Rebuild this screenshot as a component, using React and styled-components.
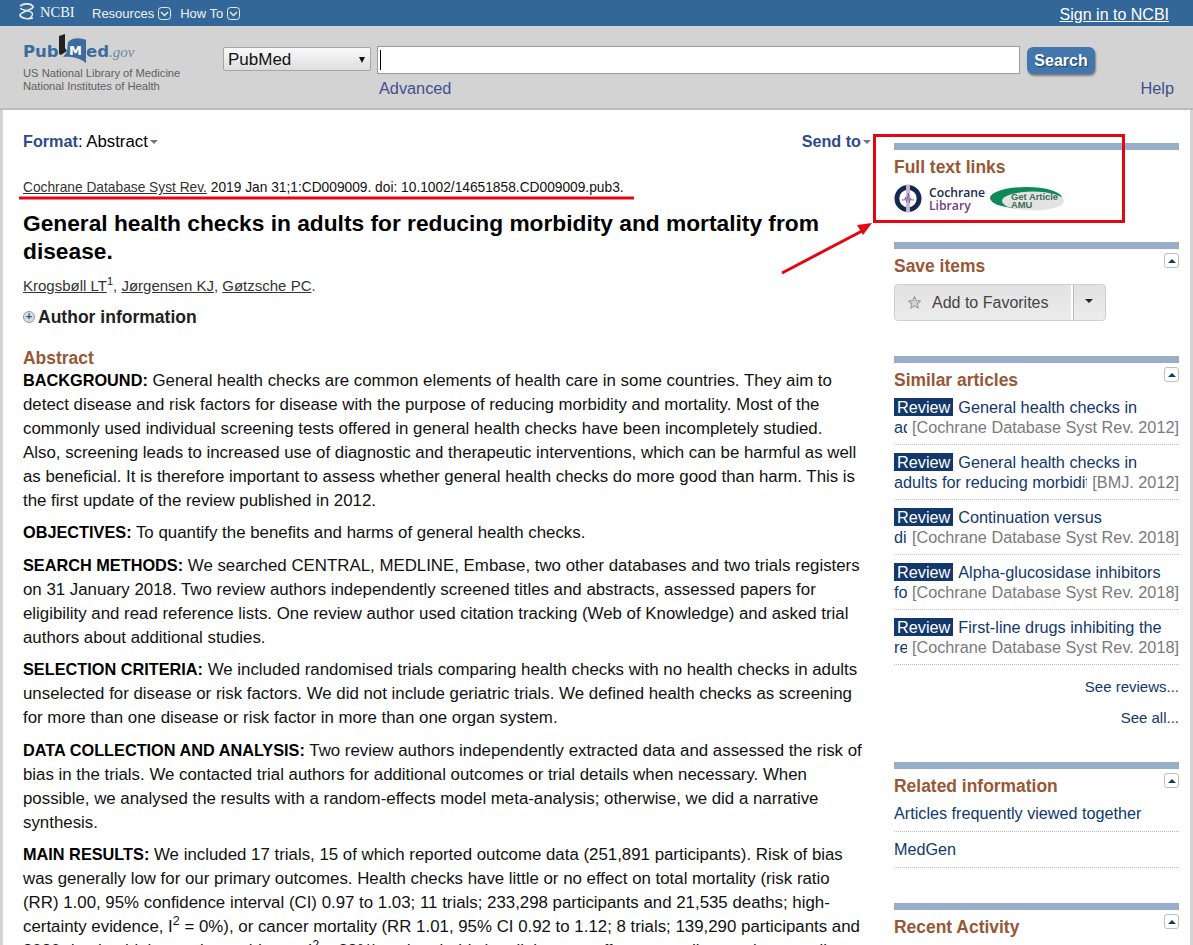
import React from "react";
import styled, { createGlobalStyle } from "styled-components";

const Global = createGlobalStyle`
  html, body { margin: 0; padding: 0; height: 945px; overflow: hidden; background: #fff; }
  body { font-family: "Liberation Sans", Arial, sans-serif; color: #000; }
  #root { height: 945px; overflow: hidden; }
  * { box-sizing: border-box; }
`;

const Page = styled.div`position: relative; width: 1193px; height: 945px; overflow: hidden;`;

const TopBar = styled.div`
  height: 26px; background: #336699; display: flex; align-items: center;
  padding: 0 24px 0 18px; color: #fff;
`;
const NcbiMark = styled.div`
  display: flex; align-items: center; gap: 5px; width: 74px; margin-top: -2px;
  font-family: "Liberation Serif", serif; font-size: 14.5px; color: #f2f5f9;
`;
const NavItem = styled.span`
  display: flex; align-items: center; gap: 4px; font-size: 13px; color: #eef2f7; margin-right: 9px;
`;
const SignIn = styled.a`
  margin-left: auto; font-size: 16px; color: #fff; text-decoration: underline; margin-top: 3px;
`;

const Header = styled.div`
  height: 84px; background: #d3d3d3; border-bottom: 2px solid #bcbcbc;
  display: flex; padding: 0 19px 0 23px;
`;
const Brand = styled.div`
  width: 200px; padding-top: 8px; font-size: 11.2px; line-height: 13px; color: #606060;
`;
const LogoBox = styled.div`height: 33px;`;
const SearchArea = styled.div`flex: 1; padding-top: 20px;`;
const SearchRow = styled.div`display: flex; align-items: flex-start; height: 28px;`;
const SelectBox = styled.div`
  width: 148px; height: 24px; margin-top: 1px; border: 1px solid #a6a6a6; border-radius: 2px;
  background: linear-gradient(#fbfbfb, #dddddd); display: flex; align-items: center;
  justify-content: space-between; padding: 1px 4px 0; font-size: 17px; color: #111;
`;
const SelectArrow = styled.span`
  width: 0; height: 0; border-left: 3px solid transparent; border-right: 3px solid transparent;
  border-top: 6px solid #111; margin-right: 1px;
`;
const SearchInput = styled.div`
  width: 643px; height: 28px; margin-left: 6px; background: #fff; border: 1px solid #9a9a9a;
  padding: 3px 2px;
`;
const Caret = styled.div`width: 1px; height: 20px; background: #000;`;
const SearchButton = styled.div`
  width: 68px; height: 27px; margin: 1px 0 0 7px; border-radius: 6px; background: #4276ad;
  box-shadow: 1px 2px 2px #7d7d7d; color: #fff; font-weight: 700; font-size: 16px;
  text-shadow: 1px 1px 1px #1d3d5f; display: flex; align-items: center; justify-content: center;
`;
const SearchLinks = styled.div`
  display: flex; justify-content: space-between; padding: 4px 0 0 156px; font-size: 16.3px;
  color: #3f5190; line-height: 20px;
`;

const Body = styled.div`
  height: 835px; border-left: 3px solid #d3d3d3; border-right: 3px solid #d3d3d3;
  display: flex; padding-left: 20px; overflow: hidden;
`;
const Main = styled.div`width: 845px; flex: none; padding-top: 21px;`;
const FormatRow = styled.div`
  display: flex; justify-content: space-between; font-size: 16.8px; line-height: 20px; height: 20px;
`;
const FormatLabel = styled.b`color: #2f4a8b; font-size: 16.2px;`;
const Caretdown = styled.span`
  display: inline-block; width: 0; height: 0; margin-left: 2px; vertical-align: 3px;
  border-left: 4px solid transparent; border-right: 4px solid transparent; border-top: 4px solid #777;
`;
const SendTo = styled.span`font-weight: 700; font-size: 16.2px; color: #2f4a8b; margin-right: -3px;`;
const Citation = styled.div`
  margin-top: 28px; font-size: 13.75px; line-height: 18px; color: #111; white-space: nowrap;
`;
const U = styled.span`text-decoration: underline; color: #333;`;
const Title = styled.h1`
  margin: 12px 0 0; font-size: 22.74px; line-height: 28px; font-weight: 700; color: #000; width: 830px;
`;
const Authors = styled.div`
  margin-top: 11px; font-size: 15px; line-height: 20px; color: #333;
  sup { font-size: 11px; line-height: 0; color: #222; }
`;
const AuthorInfo = styled.div`
  display: flex; align-items: center; gap: 3px; margin-top: 11px; font-size: 17.55px; font-weight: 700;
  line-height: 20px; color: #222;
`;
const Plus = styled.span`
  width: 12px; height: 12px; border-radius: 50%; background: #d8dde2; border: 1px solid #8f979f;
  color: #36557a; font-size: 11px; line-height: 9px; text-align: center; font-weight: 700;
`;
const SectionTitle = styled.div`
  font-size: 17.45px; font-weight: 700; color: #985735; line-height: 20px;
`;
const AbstractHead = styled(SectionTitle)`margin: 21px 0 1px;`;
const Para = styled.p`
  margin: 0 0 8.4px; font-size: 16.85px; line-height: 24px; color: #111;
  b { color: #000; font-size: 16.3px; line-height: 0; }
  sup { font-size: 12.5px; line-height: 0; }
`;

const Side = styled.div`width: 285px; flex: none; margin-left: 26px; padding-top: 33px;`;
const Box = styled.section`
  position: relative; border-top: 7px solid #97aec8; padding-top: 7px; height: ${(p) => p.$h}px;
`;
const Toggle = styled.div`
  position: absolute; right: 0; top: 4px; width: 15px; height: 15px;
  border: 1px solid #bdbdbd; border-radius: 3px; background: #fff; display: flex; align-items: center;
  justify-content: center;
  &::after {
    content: ""; width: 0; height: 0; border-left: 4px solid transparent; border-right: 4px solid transparent;
    border-bottom: 4px solid #12386c;
  }
`;
const Logos = styled.div`display: flex; align-items: center; margin-top: 7px;`;
const CochraneText = styled.div`
  font-family: "Open Sans", sans-serif; font-size: 12.2px; line-height: 13px; font-weight: 600; color: #16294f;
  margin: 0 5px 0 7px; width: 56px;
  span { display: block; color: #6b3f83; }
`;
const FavButton = styled.div`
  margin-top: 8px; width: 212px; height: 37px; border: 1px solid #cfcfcf; border-radius: 4px;
  background: linear-gradient(#e2e2e2, #ececec); display: flex; align-items: center;
  font-size: 16px; color: #444;
`;
const FavMain = styled.div`
  width: 178px; height: 100%; display: flex; align-items: center; gap: 11px; padding-left: 13px;
  border-right: 2px solid #fff; box-shadow: 1px 0 0 #bcbcbc;
`;
const FavArrow = styled.div`
  margin-left: 12px; width: 0; height: 0; border-left: 4px solid transparent; border-right: 4px solid transparent;
  border-top: 4px solid #222; margin-top: -3px;
`;
const Article = styled.div`
  height: 55px; border-bottom: 1px dotted #bdbdbd; padding-top: 7px; font-size: 16.25px; line-height: 20px;
  color: #12386c;
`;
const FirstLine = styled.div`white-space: nowrap; height: 20px;`;
const Badge = styled.span`
  display: inline-block; background: #12386c; color: #fff; padding: 0 3px; line-height: 18px; margin-right: 5px;
`;
const SecondLine = styled.div`display: flex; justify-content: space-between; gap: 5px; white-space: nowrap;`;
const Clip = styled.span`flex: 1; overflow: hidden; min-width: 0;`;
const Journal = styled.span`color: #7a7a7a; flex: none;`;
const More = styled.div`
  text-align: right; font-size: 15px; color: #12386c; line-height: 20px; margin-top: ${(p) => p.$mt}px;
`;
const InfoLink = styled.div`
  height: 36px; border-bottom: 1px dotted #bdbdbd; font-size: 16.2px; line-height: 20px; color: #12386c; padding-top: 7px;
`;

const Overlay = styled.svg`position: absolute; left: 0; top: 0; pointer-events: none;`;

const Chevron = () => (
  <svg width="13" height="13" viewBox="0 0 13 13">
    <rect x="0.5" y="0.5" width="12" height="12" rx="3" fill="none" stroke="#e8eef5" />
    <path d="M3 5l3.5 3.5L10 5" fill="none" stroke="#e8eef5" strokeWidth="1.4" />
  </svg>
);

const articles = [
  ["General health checks in", "adults for reducing morbidity", "[Cochrane Database Syst Rev. 2012]"],
  ["General health checks in", "adults for reducing morbidity", "[BMJ. 2012]"],
  ["Continuation versus", "discontinuation", "[Cochrane Database Syst Rev. 2018]"],
  ["Alpha-glucosidase inhibitors", "for patients", "[Cochrane Database Syst Rev. 2018]"],
  ["First-line drugs inhibiting the", "renin angiotensin", "[Cochrane Database Syst Rev. 2018]"],
];

export default function App() {
  return (
    <Page>
      <Global />
      <TopBar>
        <NcbiMark>
          <svg width="17" height="18" viewBox="0 0 16 17">
            <path d="M2 3C5 0 12 0 14 3S3 8 2 11s8 5 12 3" fill="none" stroke="#e6ecf3" strokeWidth="1.6" />
            <path d="M2 5c2 2 9 2 11 4s-1 5-3 6" fill="none" stroke="#e6ecf3" strokeWidth="1.3" />
          </svg>
          NCBI
        </NcbiMark>
        <NavItem>Resources <Chevron /></NavItem>
        <NavItem>How To <Chevron /></NavItem>
        <SignIn>Sign in to NCBI</SignIn>
      </TopBar>
      <Header>
        <Brand>
          <LogoBox>
            <svg width="112" height="33" viewBox="0 0 112 33">
              <text x="0" y="23" fontFamily="'DejaVu Sans', sans-serif" fontWeight="700" fontSize="16.5" fill="#3b6c9e">Pub</text>
              <path d="M36 2L42 0V14L44 17L38 21L36 20z" fill="#222" />
              <path d="M45 8C50 3 58 4 63 6V29C58 25 50 22 40 23L44 18z" fill="#3b6c9e" />
              <text x="46" y="21" fontFamily="'DejaVu Sans', sans-serif" fontWeight="700" fontSize="13" fill="#fff">M</text>
              <text x="63" y="23" fontFamily="'DejaVu Sans', sans-serif" fontWeight="700" fontSize="16.5" fill="#3b6c9e">ed</text>
              <text x="86" y="23" fontFamily="'Liberation Serif', serif" fontStyle="italic" fontSize="15" fill="#6d88a6">.gov</text>
            </svg>
          </LogoBox>
          US National Library of Medicine<br />National Institutes of Health
        </Brand>
        <SearchArea>
          <SearchRow>
            <SelectBox>PubMed<SelectArrow /></SelectBox>
            <SearchInput><Caret /></SearchInput>
            <SearchButton>Search</SearchButton>
          </SearchRow>
          <SearchLinks><span>Advanced</span><span>Help</span></SearchLinks>
        </SearchArea>
      </Header>
      <Body>
        <Main>
          <FormatRow>
            <span><FormatLabel>Format</FormatLabel>: Abstract<Caretdown /></span>
            <SendTo>Send to<Caretdown /></SendTo>
          </FormatRow>
          <Citation><U>Cochrane Database Syst Rev.</U> 2019 Jan 31;1:CD009009. doi: 10.1002/14651858.CD009009.pub3.</Citation>
          <Title>General health checks in adults for reducing morbidity and mortality from disease.</Title>
          <Authors><U>Krogsbøll LT</U><sup>1</sup>, <U>Jørgensen KJ</U>, <U>Gøtzsche PC</U>.</Authors>
          <AuthorInfo><Plus>+</Plus>Author information</AuthorInfo>
          <AbstractHead>Abstract</AbstractHead>
          <Para><b>BACKGROUND:</b> General health checks are common elements of health care in some countries. They aim to detect disease and risk factors for disease with the purpose of reducing morbidity and mortality. Most of the commonly used individual screening tests offered in general health checks have been incompletely studied.<br />Also, screening leads to increased use of diagnostic and therapeutic interventions, which can be harmful as well as beneficial. It is therefore important to assess whether general health checks do more good than harm. This is the first update of the review published in 2012.</Para>
          <Para><b>OBJECTIVES:</b> To quantify the benefits and harms of general health checks.</Para>
          <Para><b>SEARCH METHODS:</b> We searched CENTRAL, MEDLINE, Embase, two other databases and two trials registers on 31 January 2018. Two review authors independently screened titles and abstracts, assessed papers for eligibility and read reference lists. One review author used citation tracking (Web of Knowledge) and asked trial authors about additional studies.</Para>
          <Para><b>SELECTION CRITERIA:</b> We included randomised trials comparing health checks with no health checks in adults unselected for disease or risk factors. We did not include geriatric trials. We defined health checks as screening for more than one disease or risk factor in more than one organ system.</Para>
          <Para><b>DATA COLLECTION AND ANALYSIS:</b> Two review authors independently extracted data and assessed the risk of bias in the trials. We contacted trial authors for additional outcomes or trial details when necessary. When possible, we analysed the results with a random-effects model meta-analysis; otherwise, we did a narrative synthesis.</Para>
          <Para><b>MAIN RESULTS:</b> We included 17 trials, 15 of which reported outcome data (251,891 participants). Risk of bias was generally low for our primary outcomes. Health checks have little or no effect on total mortality (risk ratio (RR) 1.00, 95% confidence interval (CI) 0.97 to 1.03; 11 trials; 233,298 participants and 21,535 deaths; high-certainty evidence, I<sup>2</sup> = 0%), or cancer mortality (RR 1.01, 95% CI 0.92 to 1.12; 8 trials; 139,290 participants and 8020 deaths; high-certainty evidence; I<sup>2</sup> = 33%) and probably has little or no effect on cardiovascular mortality</Para>
        </Main>
        <Side>
          <Box $h={99}>
            <SectionTitle>Full text links</SectionTitle>
            <Logos>
              <svg width="28" height="29" viewBox="0 0 29 29">
                <circle cx="14.5" cy="14.5" r="11.5" fill="none" stroke="#13294f" strokeWidth="5" />
                <rect x="12.5" y="0" width="4" height="29" fill="#c9b6d3" />
                <path d="M8 16h3l1-3 1 5 2-9 1 10 1-5 1 2h3" fill="none" stroke="#7d5a93" strokeWidth="1" />
              </svg>
              <CochraneText>Cochrane<span>Library</span></CochraneText>
              <svg width="74" height="25" viewBox="0 0 74 25">
                <ellipse cx="36" cy="12" rx="36" ry="11" fill="#0d8a55" />
                <ellipse cx="43" cy="15" rx="31" ry="9.5" fill="#e3e3e3" />
                <text x="21" y="14" fontFamily="'Liberation Sans', sans-serif" fontWeight="700" fontSize="9.4" fill="#3f6a58">Get Article</text>
                <text x="21" y="22" fontFamily="'Liberation Sans', sans-serif" fontWeight="700" fontSize="9.4" fill="#3f6a58">AMU</text>
              </svg>
            </Logos>
          </Box>
          <Box $h={114}>
            <Toggle />
            <SectionTitle>Save items</SectionTitle>
            <FavButton>
              <FavMain>
                <svg width="13" height="13" viewBox="0 0 24 24"><path d="M12 1.5l3.2 7 7.6.8-5.7 5.1 1.6 7.5L12 18.1l-6.7 3.8 1.6-7.5L1.2 9.3l7.6-.8z" fill="#d5d5d5" stroke="#999" strokeWidth="2" /></svg>
                Add to Favorites
              </FavMain>
              <FavArrow />
            </FavButton>
          </Box>
          <Box $h={406}>
            <Toggle />
            <SectionTitle>Similar articles</SectionTitle>
            {articles.map((a, i) => (
              <Article key={i}>
                <FirstLine><Badge>Review</Badge>{a[0]}</FirstLine>
                <SecondLine><Clip>{a[1]}</Clip><Journal>{a[2]}</Journal></SecondLine>
              </Article>
            ))}
            <More $mt={12}>See reviews...</More>
            <More $mt={11}>See all...</More>
          </Box>
          <Box $h={141}>
            <Toggle />
            <SectionTitle>Related information</SectionTitle>
            <InfoLink>Articles frequently viewed together</InfoLink>
            <InfoLink>MedGen</InfoLink>
          </Box>
          <Box $h={60}>
            <Toggle />
            <SectionTitle>Recent Activity</SectionTitle>
          </Box>
        </Side>
      </Body>
      <Overlay width="1193" height="945" viewBox="0 0 1193 945">
        <rect x="874.5" y="135.5" width="249" height="86" fill="none" stroke="#e30613" strokeWidth="3" />
        <rect x="19" y="196.5" width="615" height="3" fill="#e30613" />
        <path d="M782 273L862 231" stroke="#e30613" strokeWidth="3" fill="none" />
        <path d="M872 223l-15 2 6 10z" fill="#e30613" />
      </Overlay>
    </Page>
  );
}
